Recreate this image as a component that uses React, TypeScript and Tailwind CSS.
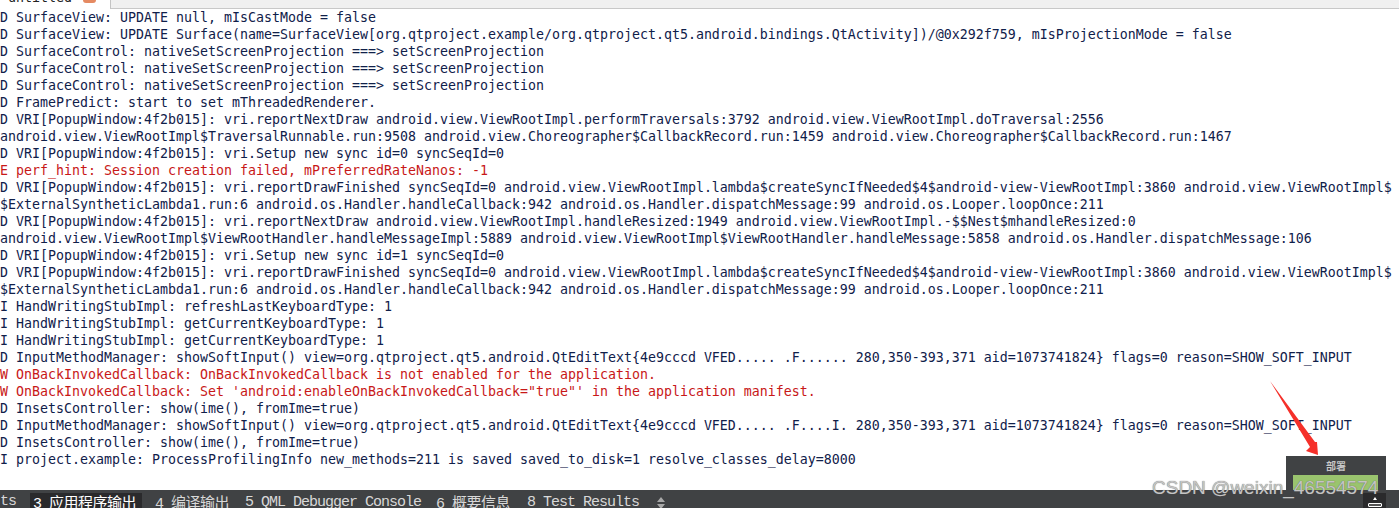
const lines: [string, string?][] = [
  ["D SurfaceView: UPDATE null, mIsCastMode = false"],
  ["D SurfaceView: UPDATE Surface(name=SurfaceView[org.qtproject.example/org.qtproject.qt5.android.bindings.QtActivity])/@0x292f759, mIsProjectionMode = false"],
  ["D SurfaceControl: nativeSetScreenProjection ===> setScreenProjection"],
  ["D SurfaceControl: nativeSetScreenProjection ===> setScreenProjection"],
  ["D SurfaceControl: nativeSetScreenProjection ===> setScreenProjection"],
  ["D FramePredict: start to set mThreadedRenderer."],
  ["D VRI[PopupWindow:4f2b015]: vri.reportNextDraw android.view.ViewRootImpl.performTraversals:3792 android.view.ViewRootImpl.doTraversal:2556"],
  ["android.view.ViewRootImpl$TraversalRunnable.run:9508 android.view.Choreographer$CallbackRecord.run:1459 android.view.Choreographer$CallbackRecord.run:1467"],
  ["D VRI[PopupWindow:4f2b015]: vri.Setup new sync id=0 syncSeqId=0"],
  ["E perf_hint: Session creation failed, mPreferredRateNanos: -1", "r"],
  ["D VRI[PopupWindow:4f2b015]: vri.reportDrawFinished syncSeqId=0 android.view.ViewRootImpl.lambda$createSyncIfNeeded$4$android-view-ViewRootImpl:3860 android.view.ViewRootImpl$"],
  ["$ExternalSyntheticLambda1.run:6 android.os.Handler.handleCallback:942 android.os.Handler.dispatchMessage:99 android.os.Looper.loopOnce:211"],
  ["D VRI[PopupWindow:4f2b015]: vri.reportNextDraw android.view.ViewRootImpl.handleResized:1949 android.view.ViewRootImpl.-$$Nest$mhandleResized:0"],
  ["android.view.ViewRootImpl$ViewRootHandler.handleMessageImpl:5889 android.view.ViewRootImpl$ViewRootHandler.handleMessage:5858 android.os.Handler.dispatchMessage:106"],
  ["D VRI[PopupWindow:4f2b015]: vri.Setup new sync id=1 syncSeqId=0"],
  ["D VRI[PopupWindow:4f2b015]: vri.reportDrawFinished syncSeqId=0 android.view.ViewRootImpl.lambda$createSyncIfNeeded$4$android-view-ViewRootImpl:3860 android.view.ViewRootImpl$"],
  ["$ExternalSyntheticLambda1.run:6 android.os.Handler.handleCallback:942 android.os.Handler.dispatchMessage:99 android.os.Looper.loopOnce:211"],
  ["I HandWritingStubImpl: refreshLastKeyboardType: 1"],
  ["I HandWritingStubImpl: getCurrentKeyboardType: 1"],
  ["I HandWritingStubImpl: getCurrentKeyboardType: 1"],
  ["D InputMethodManager: showSoftInput() view=org.qtproject.qt5.android.QtEditText{4e9cccd VFED..... .F...... 280,350-393,371 aid=1073741824} flags=0 reason=SHOW_SOFT_INPUT"],
  ["W OnBackInvokedCallback: OnBackInvokedCallback is not enabled for the application.", "r"],
  ["W OnBackInvokedCallback: Set 'android:enableOnBackInvokedCallback=\"true\"' in the application manifest.", "r"],
  ["D InsetsController: show(ime(), fromIme=true)"],
  ["D InputMethodManager: showSoftInput() view=org.qtproject.qt5.android.QtEditText{4e9cccd VFED..... .F....I. 280,350-393,371 aid=1073741824} flags=0 reason=SHOW_SOFT_INPUT"],
  ["D InsetsController: show(ime(), fromIme=true)"],
  ["I project.example: ProcessProfilingInfo new_methods=211 is saved saved_to_disk=1 resolve_classes_delay=8000"],
];

const tabs: { n: string; cjk?: string; latin?: string; cls: string }[] = [
  { n: "3", cjk: "应用程序输出", cls: "ml-[3px] w-[112px] bg-[#2a2a2c] pl-[3px] text-white" },
  { n: "4", cjk: "编译输出", cls: "ml-[13px] w-[90px]" },
  { n: "5", latin: "QML Debugger Console", cls: "w-[191px]" },
  { n: "6", cjk: "概要信息", cls: "w-[91px]" },
  { n: "8", latin: "Test Results", cls: "w-[133px]" },
];

export default function App() {
  return (
    <div className="relative flex h-[508px] w-[1399px] flex-col overflow-hidden bg-white">
      <div className="flex h-[9px] overflow-hidden bg-white">
        <div className="relative flex w-[111px] border-r border-[#c4c4c4]">
          <span className="mt-[-11px] ml-[8px] font-['DejaVu_Sans_Mono',monospace] text-[13.3px] leading-[17px] whitespace-pre text-[#222]">
            untitled
          </span>
          <span className="ml-[11px] h-[3px] w-[13px] rounded-b-sm bg-[#e58a62]" />
        </div>
        <div className="flex-1 border-b border-[#c8c8c8] bg-[#f0f0f0]" />
      </div>
      <div className="flex-1 overflow-hidden font-['DejaVu_Sans_Mono',monospace] text-[13.28px] leading-[17px] tracking-[0.012px] whitespace-pre">
        {lines.map(([t, c], i) => (
          <div key={i} className={c ? "text-[#c81818]" : "text-[#10204a]"}>
            {t}
          </div>
        ))}
      </div>
      <div className="flex h-[18px] items-stretch overflow-hidden bg-[#404244] pt-[3px] font-['Liberation_Mono','Noto_Sans_CJK_SC',monospace] leading-[18px] text-[#d8d8d8]">
        <span className="w-[27px] text-[15px] tracking-[-1px] whitespace-pre">ts</span>
        {tabs.map((t) => (
          <span key={t.n} className={`block overflow-hidden whitespace-pre ${t.cls}`}>
            <span className="text-[15px] tracking-[-1px]">{t.n + " "}</span>
            {t.cjk ? (
              <span className="font-['Noto_Sans_CJK_SC',sans-serif] text-[15px] tracking-[-0.5px]">{t.cjk}</span>
            ) : (
              <span className="text-[15px] tracking-[-1px]">{t.latin}</span>
            )}
          </span>
        ))}
        <svg className="mt-[3px] ml-[-4px]" width="10" height="14" viewBox="0 0 10 14">
          <path d="M5 1 L9 6 H1 Z M1 8 H9 L5 13 Z" fill="#a8a8a8" />
        </svg>
      </div>
      <div className="absolute left-[1286px] top-[456px] flex h-[34px] w-[100px] flex-col items-center bg-[#404244] pt-[3px]">
        <span className="font-['Noto_Sans_CJK_SC',sans-serif] text-[10px] leading-[14px] font-bold text-[#c8c8c8]">部署</span>
        <div className="mt-[2px] ml-[-1px] h-[15px] w-[85px] bg-[#9ac46e]" />
      </div>
      <div className="absolute left-[1363px] top-[493px] flex h-[15px] w-[23px] flex-col items-center justify-end bg-[#2a2a2c] pb-px">
        <span className="mb-[3px] h-0 w-0 border-x-[2px] border-b-[3px] border-x-transparent border-b-white" />
        <span className="h-[4px] w-[14px] rounded-[1px] border border-white bg-[#555]" />
      </div>
      <svg className="absolute left-[1265px] top-[378px]" width="60" height="80" viewBox="0 0 60 80">
        <path d="M5 3 L50 64 L52 64 L53 77 L41 73 L45 69 Z" fill="#f5302a" />
      </svg>
      <div className="absolute left-[1152px] top-[476px] font-['Liberation_Sans',sans-serif] text-[19px] leading-6 whitespace-pre text-[#c4c4c4] [text-shadow:0_0_1px_#555]">
        CSDN @weixin_46554574
      </div>
    </div>
  );
}
